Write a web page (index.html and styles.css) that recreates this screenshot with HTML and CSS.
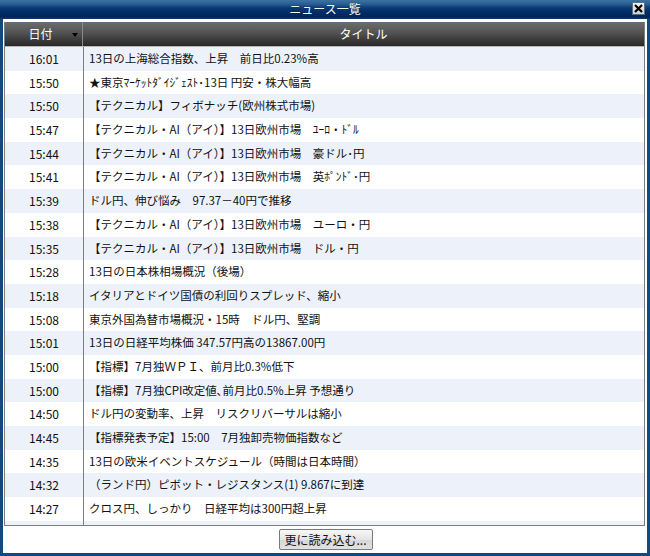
FILE: index.html
```html
<!DOCTYPE html>
<html lang="ja">
<head>
<meta charset="utf-8">
<link rel="stylesheet" href="styles.css">
</head>
<body>
<div class="window">
  <div class="titlebar">
    <span class="title">ニュース一覧</span>
    <span class="close"><svg width="9" height="9" viewBox="0 0 9 9"><path d="M1 1L8 8M8 1L1 8" stroke="#000" stroke-width="2.2"/></svg></span>
  </div>
  <div class="content">
    <div class="grid">
      <div class="head">
        <div class="hcell time">日付<span class="sort"></span></div>
        <div class="hcell ttl">タイトル</div>
      </div>
      <div class="body">
        <div class="row"><div class="c-time">16:01</div><div class="c-title">13日の上海総合指数、上昇　前日比0.23%高</div></div>
        <div class="row"><div class="c-time">15:50</div><div class="c-title">★東京ﾏｰｹｯﾄﾀﾞｲｼﾞｪｽﾄ･13日 円安・株大幅高</div></div>
        <div class="row"><div class="c-time">15:50</div><div class="c-title">【テクニカル】フィボナッチ(欧州株式市場)</div></div>
        <div class="row"><div class="c-time">15:47</div><div class="c-title">【テクニカル・AI（アイ）】13日欧州市場　ﾕｰﾛ・ﾄﾞﾙ</div></div>
        <div class="row"><div class="c-time">15:44</div><div class="c-title">【テクニカル・AI（アイ）】13日欧州市場　豪ドル･円</div></div>
        <div class="row"><div class="c-time">15:41</div><div class="c-title">【テクニカル・AI（アイ）】13日欧州市場　英ﾎﾟﾝﾄﾞ･円</div></div>
        <div class="row"><div class="c-time">15:39</div><div class="c-title">ドル円、伸び悩み　97.37－40円で推移</div></div>
        <div class="row"><div class="c-time">15:38</div><div class="c-title">【テクニカル・AI（アイ）】13日欧州市場　ユーロ・円</div></div>
        <div class="row"><div class="c-time">15:35</div><div class="c-title">【テクニカル・AI（アイ）】13日欧州市場　ドル・円</div></div>
        <div class="row"><div class="c-time">15:28</div><div class="c-title">13日の日本株相場概況（後場）</div></div>
        <div class="row"><div class="c-time">15:18</div><div class="c-title">イタリアとドイツ国債の利回りスプレッド、縮小</div></div>
        <div class="row"><div class="c-time">15:08</div><div class="c-title">東京外国為替市場概況・15時　ドル円、堅調</div></div>
        <div class="row"><div class="c-time">15:01</div><div class="c-title">13日の日経平均株価 347.57円高の13867.00円</div></div>
        <div class="row"><div class="c-time">15:00</div><div class="c-title">【指標】7月独ＷＰＩ、前月比0.3%低下</div></div>
        <div class="row"><div class="c-time">15:00</div><div class="c-title">【指標】7月独CPI改定値､前月比0.5%上昇 予想通り</div></div>
        <div class="row"><div class="c-time">14:50</div><div class="c-title">ドル円の変動率、上昇　リスクリバーサルは縮小</div></div>
        <div class="row"><div class="c-time">14:45</div><div class="c-title">【指標発表予定】15:00　7月独卸売物価指数など</div></div>
        <div class="row"><div class="c-time">14:35</div><div class="c-title">13日の欧米イベントスケジュール（時間は日本時間）</div></div>
        <div class="row"><div class="c-time">14:32</div><div class="c-title">（ランド円）ピボット・レジスタンス(1) 9.867に到達</div></div>
        <div class="row"><div class="c-time">14:27</div><div class="c-title">クロス円、しっかり　日経平均は300円超上昇</div></div>
        <div class="row row-empty"><div class="c-time"></div><div class="c-title"></div></div>
      </div>
    </div>
    <div class="footer">
      <button class="more">更に読み込む...</button>
    </div>
  </div>
</div>
</body>
</html>
```
FILE: styles.css
```css
html, body {
  margin: 0;
  padding: 0;
}
body {
  width: 650px;
  height: 556px;
  overflow: hidden;
  font-family: "Noto Sans CJK JP", "Noto Sans", sans-serif;
  font-size: 12px;
}
.window {
  width: 650px;
  height: 556px;
  box-sizing: border-box;
  background: #124a7e;
  padding: 0 3px 3px 3px;
  display: flex;
  flex-direction: column;
}
.titlebar {
  position: relative;
  height: 19px;
  margin: 0 -3px;
  background: linear-gradient(#3d72a3 0, #2a5f92 4px, #0a3a74 8px, #022c66 12px, #002658 17px, #0d3c70 19px);
  display: flex;
  align-items: center;
  justify-content: center;
}
.title {
  color: #fff;
  font-size: 12px;
  line-height: 16px;
  margin-top: -1px;
  text-shadow: 0 0 1px #0a2a55;
}
.close {
  position: absolute;
  right: 5px;
  top: 2px;
  width: 13px;
  height: 13px;
  box-sizing: border-box;
  background: linear-gradient(#f4f4f4, #cfcfcf);
  border: 1px solid #5a6f88;
  display: flex;
  align-items: center;
  justify-content: center;
}
.content {
  flex: 1;
  background: #fff;
  padding: 3px 2px 0 1px;
  display: flex;
  flex-direction: column;
}
.grid {
  border: 1px solid #7d7d7d;
  border-top: 0;
  display: flex;
  flex-direction: column;
}
.head {
  display: flex;
  height: 24px;
  background: linear-gradient(#6c6c6c 0, #5d5d5d 7px, #4f4f4f 12px, #404040 16px, #2f2f2f 22px, #262626 24px);
  border-bottom: 1px solid #b9b9b9;
  color: #fff;
}
.hcell {
  display: flex;
  align-items: center;
  justify-content: center;
  position: relative;
  line-height: 24px;
}
.hcell.time {
  width: 78px;
  border-right: 1px solid #8a8a8a;
  padding-right: 6px;
  box-sizing: border-box;
}
.hcell.ttl {
  flex: 1;
}
.sort {
  position: absolute;
  right: 4px;
  top: 11px;
  width: 0;
  height: 0;
  border-left: 3px solid transparent;
  border-right: 3px solid transparent;
  border-top: 4px solid #000;
}
.body {
  height: 478px;
  overflow: hidden;
}
.row {
  display: flex;
  height: 23.7px;
  line-height: 23.7px;
  color: #111;
  font-size: 11.5px;
}
.row:nth-child(odd) {
  background: #edf2fa;
}
.c-time {
  width: 78px;
  text-align: center;
  border-right: 1px solid #7d7d7d;
  font-size: 12px;
}
.c-title {
  flex: 1;
  padding-left: 5px;
  white-space: nowrap;
}
.footer {
  display: flex;
  justify-content: center;
  padding-top: 3px;
}
.more {
  width: 94px;
  height: 21px;
  padding: 0;
  font-family: "Noto Sans CJK JP", "Noto Sans", sans-serif;
  font-size: 12px;
  color: #111;
  background: linear-gradient(#f7f7f7, #e4e4e4 50%, #d6d6d6 51%, #e2e2e2);
  border: 1px solid #7a7a7a;
  border-radius: 2px;
  margin-left: 2px;
}
```
